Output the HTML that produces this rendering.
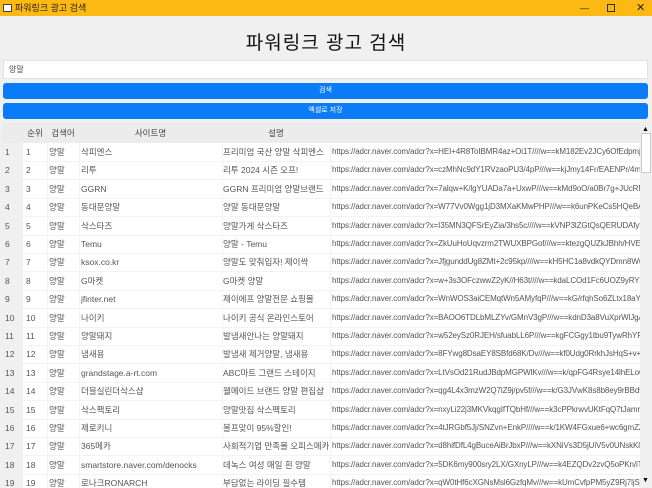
<!DOCTYPE html>
<html><head><meta charset="utf-8"><style>
*{margin:0;padding:0;box-sizing:border-box}
body{width:652px;height:488px;overflow:hidden;background:#f0f0f0;font-family:"Liberation Sans","Noto Sans CJK KR",sans-serif;position:relative}
.tb{position:absolute;left:0;top:0;width:652px;height:16px;background:#fdb913;font-size:9px;color:#222;line-height:16px}
.tb .ic{position:absolute;left:3px;top:4px;width:9px;height:8px;border:1px solid #444;background:#fff}
.tb .t{position:absolute;left:15px}
.h1{position:absolute;top:28px;width:652px;text-align:center;font-size:19px;color:#111;letter-spacing:1px}
.inp{position:absolute;left:3px;top:60px;width:645px;height:19px;background:#fff;border:1px solid #e2e2e2;font-size:8px;color:#444;line-height:18px;padding-left:5px}
.btn{position:absolute;left:3px;width:645px;height:16px;background:#0a7cf8;border-radius:3px;color:#fff;font-size:7px;text-align:center;line-height:16px}
.tbl{position:absolute;left:3px;top:123px;width:637px;height:365px;background:#fff;overflow:hidden}
.hd{position:absolute;top:0;height:20px;left:0;width:637px;background:#ececec}
.c{position:absolute;font-size:8.5px;color:#555;white-space:nowrap;overflow:hidden;line-height:18.4px}
.u{font-size:8px;letter-spacing:-0.1px}
.hd .c{line-height:20px;color:#444;text-align:center}
.rn{position:absolute;left:0;top:20px;width:20px;height:345px;background:#f0f0f0}
.sb{position:absolute;left:640px;top:123px;width:12px;height:365px;background:#f0f0f0}
.vl{position:absolute;top:20px;height:345px;width:1px;background:#f3f3f3}
</style></head><body>
<div class="tb"><div class="ic"></div><span class="t">파워링크 광고 검색</span>
<span style="position:absolute;left:580px;top:0">—</span><span style="position:absolute;left:607px;top:4px;width:8px;height:8px;border:1px solid #333"></span><span style="position:absolute;left:636px;font-size:11px">✕</span></div>
<div class="h1">파워링크 광고 검색</div>
<div class="inp">양말</div>
<div class="btn" style="top:83px">검색</div>
<div class="btn" style="top:103px">엑셀로 저장</div>
<div class="tbl">
<div class="hd">
<div class="c" style="left:20px;width:24px">순위</div>
<div class="c" style="left:44px;width:32px">검색어</div>
<div class="c" style="left:76px;width:143px">사이트명</div>
<div class="c" style="left:219px;width:108px">설명</div>
</div>
<div class="rn"></div>
<div class="vl" style="left:44px"></div><div class="vl" style="left:76px"></div><div class="vl" style="left:219px"></div><div class="vl" style="left:327px"></div>
<div id="rows"></div>
</div>
<div class="sb"><div style="position:absolute;left:2px;top:3px;font-size:7px">▲</div><div style="position:absolute;left:1px;top:10px;width:10px;height:40px;background:#fff;border:1px solid #ccc"></div><div style="position:absolute;left:2px;top:354px;font-size:7px">▼</div></div>
<script>
var d=[["삭피엔스","프리미엄 국산 양말 삭피엔스","HEI+4R8ToIBMR4az+Oi1T////w==kM182Ev2JCy6OfEdpmjUE"],
["리투","리투 2024 시즌 오프!","czMhNc9dY1RVzaoPU3/4pP///w==kjJmy14Fr/EAENPr/4mfkt"],
["GGRN","GGRN 프리미엄 양말브랜드","7alqw+K/lgYUADa7a+UxwP///w==kMd9oO/a0Br7g+JUcRM"],
["동대문양말","양말 동대문양말","W77Vv0Wgg1jD3MXaKMwPHP///w==k6unPKeCs5HQeBAT3"],
["삭스타즈","양말가게 삭스타즈","I35MN3QFSrEyZia/3hs5c////w==kVNP3lZGtQsQERUDAfyfCQ"],
["Temu","양말 - Temu","ZkUuHoUqvzrm2TWUXBPGof///w==ktezgQUZkJBhh/HVEtB7"],
["ksox.co.kr","양말도 맞춰입자! 제이싹","JfjgunddUg8ZMt+2c95kp////w==kH5HC1a8vdkQYDmn8Ww"],
["G마켓","G마켓 양말","w+3s3OFczwwZ2yK//H63t////w==kdaLCOd1Fc6UOZ9yRYXEk"],
["jfinter.net","제이에프 양말전문 쇼핑몰","WnWOS3aiCEMqtWn5AMyfqP///w==kG/rfqhSo6ZLtx18aYER"],
["나이키","나이키 공식 온라인스토어","BAOO6TDLbMLZYv/GMnV3gP///w==kdnD3a8VuXprWlJgA+v"],
["양말돼지","발냄새안나는 양말돼지","w52eySz0RJEH/sfuabLL6P///w==kgFCGgy1tbu9TywRhYRwQ"],
["냄새용","발냄새 제거양말, 냄새용","8FYwg8DsaEY8SBfd68K/Dv///w==kf0Udg0RrkhJsHqS+v+nPN"],
["grandstage.a-rt.com","ABC마트 그랜드 스테이지","LtVsOd21RudJBdpMGPWlKv///w==k/qpFG4Rsye14lhELoOg"],
["더블실린더삭스샵","웰메이드 브랜드 양말 편집샵","qg4L4x3mzW2Q7lZ9j/pv5f///w==k/G3JVwK8s8b8ey9rBBd9u"],
["삭스팩토리","양말맛집 삭스팩토리","nxyLi22j3MKVkqgIfTQbHf///w==k3cPPkrwvUKtFqQ7tJamr9N"],
["제로키니","볼프맞이 95%할인!","4tJRGbf5Jj/SNZvn+EnkP////w==k/1KW4FGxue6+wc6gmZZ3y"],
["365메카","사회적기업 만족몰 오피스메카","d8hifDfL4gBuceAiBrJbxP///w==kXNiVs3D5jUiV5v0UNskKlap"],
["smartstore.naver.com/denocks","데녹스 여성 매일 흰 양말","5DK6my900sry2LX/GXnyLP///w==k4EZQDv2zvQ5oPKn/iTnPT"],
["로나크RONARCH","부담없는 라이딩 필수템","qW0tHf6cXGNsMsl6GzfqMv///w==kUmCvfpPM5yZ9Rj7ljSjT"]];
var h="";d.forEach(function(r,i){var t=20+i*18.4;
h+='<div class="c" style="top:'+t+'px;left:2px;width:18px">'+(i+1)+'</div>'+
'<div class="c" style="top:'+t+'px;left:23px;width:20px">'+(i+1)+'</div>'+
'<div class="c" style="top:'+t+'px;left:46px;width:30px">양말</div>'+
'<div class="c" style="top:'+t+'px;left:78px;width:140px">'+r[0]+'</div>'+
'<div class="c" style="top:'+t+'px;left:220px;width:106px">'+r[1]+'</div>'+
'<div class="c u" style="top:'+t+'px;left:329px;width:308px">https://adcr.naver.com/adcr?x='+r[2]+'</div>'+
'<div style="position:absolute;left:20px;width:617px;height:1px;background:#f3f3f3;top:'+(t+18)+'px"></div>';});
document.getElementById("rows").innerHTML=h;
</script>
</body></html>
